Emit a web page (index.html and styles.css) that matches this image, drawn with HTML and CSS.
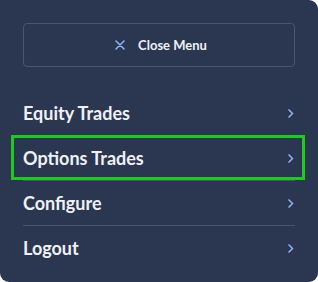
FILE: index.html
```html
<!DOCTYPE html>
<html lang="en">

<head>
    <meta charset="UTF-8">
    <title>Menu</title>
    <link rel="stylesheet" href="styles.css">
</head>

<body>
    <nav class="menu-panel">
        <button class="close-button">
            <svg class="close-icon" width="10" height="10" viewBox="0 0 10 10">
                <path d="M1 1 L9 9 M9 1 L1 9" stroke="#8fb3ee" stroke-width="1.6" stroke-linecap="round" />
            </svg>
            <span>Close Menu</span>
        </button>

        <ul class="menu-list">
            <li class="menu-item">
                <span>Equity Trades</span>
                <svg class="chevron" width="7" height="11" viewBox="0 0 7 11">
                    <path d="M1.5 1.5 L5.5 5.5 L1.5 9.5" fill="none" stroke="#8fb3ee" stroke-width="1.5" />
                </svg>
            </li>
            <li class="menu-item focused">
                <span>Options Trades</span>
                <svg class="chevron" width="7" height="11" viewBox="0 0 7 11">
                    <path d="M1.5 1.5 L5.5 5.5 L1.5 9.5" fill="none" stroke="#8fb3ee" stroke-width="1.5" />
                </svg>
            </li>
            <li class="menu-item">
                <span>Configure</span>
                <svg class="chevron" width="7" height="11" viewBox="0 0 7 11">
                    <path d="M1.5 1.5 L5.5 5.5 L1.5 9.5" fill="none" stroke="#8fb3ee" stroke-width="1.5" />
                </svg>
            </li>
            <li class="menu-item">
                <span>Logout</span>
                <svg class="chevron" width="7" height="11" viewBox="0 0 7 11">
                    <path d="M1.5 1.5 L5.5 5.5 L1.5 9.5" fill="none" stroke="#8fb3ee" stroke-width="1.5" />
                </svg>
            </li>
        </ul>
    </nav>
</body>

</html>
```

FILE: styles.css
```css
body {
    margin: 0;
    background: #ffffff;
    font-family: Lato, "Open Sans", sans-serif;
}

/* panel */
.menu-panel {
    width: 318px;
    height: 282px;
    box-sizing: border-box;
    padding: 23px 23px 0;
    background: #2b3650;
    border-radius: 0 9px 9px 9px;
}

/* close button */
.close-button {
    display: flex;
    align-items: center;
    justify-content: center;
    gap: 13px;
    width: 100%;
    height: 44px;
    padding: 0 0 0 4px;
    background: transparent;
    border: 1px solid #4a5573;
    border-radius: 4px;
    color: #eef1f7;
    font-family: inherit;
    font-size: 13px;
    font-weight: 700;
}

/* menu items */
.menu-list {
    list-style: none;
    margin: 24px 0 0;
    padding: 0;
}

.menu-item {
    position: relative;
    display: flex;
    align-items: center;
    justify-content: space-between;
    height: 44px;
    color: #eef1f7;
    font-size: 18px;
    font-weight: 700;
    border-bottom: 1px solid #46526e;
}

.menu-item:last-child {
    border-bottom: none;
}

.chevron {
    margin-right: 1px;
}

/* focus ring */
.menu-item.focused::after {
    content: "";
    position: absolute;
    top: -1px;
    left: -12px;
    right: -10px;
    bottom: 0;
    border: 3px solid #1ccc1c;
}
```
